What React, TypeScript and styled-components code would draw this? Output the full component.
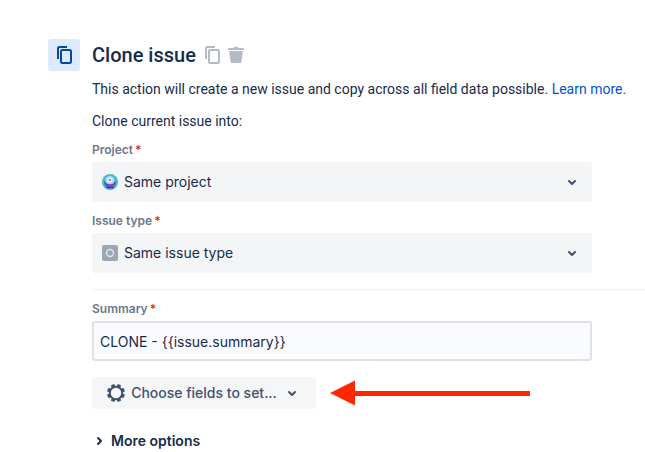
import React from "react";
import styled, { createGlobalStyle } from "styled-components";

const GlobalStyle = createGlobalStyle`
  *, *::before, *::after { box-sizing: border-box; }
  body {
    margin: 0;
    background: #fff;
    color: #172b4d;
    font-family: Inter, "Liberation Sans", sans-serif;
    font-size: 14px;
    line-height: 20px;
    overflow-x: hidden;
  }
  button, input, select { font: inherit; color: inherit; margin: 0; }
`;

const Page = styled.main`
  display: flex;
  align-items: flex-start;
  gap: 12px;
  padding: 39px 0 0 48px;
`;

const ActionTile = styled.div`
  display: flex;
  align-items: center;
  justify-content: center;
  flex: none;
  width: 32px;
  height: 32px;
  border-radius: 3px;
  background: #deebff;
  color: #0747a6;
`;

const Content = styled.section`
  flex: 1;
  min-width: 0;
`;

const Header = styled.header`
  display: flex;
  align-items: center;
  height: 32px;
`;

const Title = styled.h1`
  margin: 0 4px 0 0;
  font-family: Roboto, sans-serif;
  font-size: 20px;
  line-height: 24px;
  font-weight: 500;
`;

const IconButton = styled.button`
  display: flex;
  padding: 0;
  border: 0;
  background: none;
  color: #b3bac5;
  cursor: pointer;
`;

const Text = styled.p`
  margin: 8px 0 12px;
  font-family: Roboto, sans-serif;

  & + & { margin: 0; }
`;

const Link = styled.a`
  color: #0052cc;
  text-decoration: none;
`;

const Field = styled.div`
  max-width: 500px;
  margin-top: 11px;
`;

const Label = styled.label`
  display: block;
  margin-bottom: 4px;
  color: #6b778c;
  font-size: 12px;
  line-height: 16px;
  font-weight: 600;
`;

const Required = styled.span`
  margin-left: 2px;
  color: #de350b;
`;

const SelectBox = styled.div`
  display: grid;
  grid-template-columns: 16px 1fr 24px;
  align-items: center;
  padding: 0 8px 0 10px;
  height: 40px;
  border-radius: 3px;
  background: #f4f5f7;
  color: #42526e;

  svg { pointer-events: none; }
`;

const Select = styled.select`
  width: 100%;
  height: 40px;
  padding: 0 6px;
  border: 0;
  background: transparent;
  color: #172b4d;
  appearance: none;
  outline: none;
`;

const Divider = styled.hr`
  height: 1px;
  margin: 16px 0 0;
  border: 0;
  background: #f0f1f3;
`;

const Input = styled.input`
  display: block;
  width: 100%;
  height: 40px;
  padding: 0 6px;
  border: 2px solid #dfe1e6;
  border-radius: 3px;
  background: #fafbfc;
  outline: none;
`;

const FieldsRow = styled.div`
  display: flex;
  align-items: center;
  gap: 14px;
  margin-top: 16px;
`;

const FieldsButton = styled.button`
  display: flex;
  align-items: center;
  justify-content: space-between;
  width: 224px;
  height: 32px;
  padding: 0 12px;
  border: 0;
  border-radius: 3px;
  background: #f5f6f8;
  color: #42526e;
  font-weight: 500;
  white-space: nowrap;
  cursor: pointer;
`;

const MoreButton = styled.button`
  display: flex;
  align-items: center;
  gap: 3px;
  margin-top: 22px;
  padding: 0;
  border: 0;
  background: none;
  font-weight: 600;
  cursor: pointer;
`;

const CopyIcon = () => (
  <svg width="24" height="24" viewBox="0 0 24 24" fill="none" stroke="currentColor" strokeWidth="2" aria-hidden="true">
    <path d="M6 16V5.500A1.500 1.500 0 0 1 7.500 4H15" />
    <rect x="9" y="7" width="10" height="13" rx="1.5" />
  </svg>
);

const TrashIcon = () => (
  <svg width="24" height="24" viewBox="0 0 24 24" fill="currentColor" aria-hidden="true">
    <path d="M4 6a1 1 0 0 1 1-1h4.500a1 1 0 0 1 1-1h3a1 1 0 0 1 1 1H19a1 1 0 0 1 1 1v1H4z" />
    <path d="M5 8h14l-1.700 11a1 1 0 0 1-1 1H7.700a1 1 0 0 1-1-1z" />
  </svg>
);

const ChevronDown = () => (
  <svg width="24" height="24" viewBox="0 0 24 24" fill="none" stroke="currentColor" strokeWidth="2" strokeLinecap="round" strokeLinejoin="round" aria-hidden="true">
    <path d="M9 11l3 3 3-3" />
  </svg>
);

const ChevronRight = () => (
  <svg width="16" height="16" viewBox="0 0 16 16" fill="none" stroke="currentColor" strokeWidth="2" strokeLinecap="round" strokeLinejoin="round" aria-hidden="true">
    <path d="M6 5l3 3-3 3" />
  </svg>
);

const ProjectAvatar = () => (
  <svg width="16" height="16" viewBox="0 0 16 16" aria-hidden="true">
    <circle cx="8" cy="8" r="8" fill="#3fc1c5" />
    <path d="M2 7.500h12c0 3-1.200 4.500-3 5.500v1.500H5V13C3.200 12 2 10.500 2 7.500z" fill="#6950bd" />
    <path d="M4 13h8l-.5 1h-7z" fill="#403294" />
    <circle cx="8" cy="6.500" r="4.500" fill="#b3d4ff" />
    <circle cx="8" cy="6" r="2.500" fill="#f4f5f7" />
    <circle cx="8" cy="6" r="1.300" fill="#6d9fda" />
    <path d="M3.500 9c2.500 1.500 6.500 1.500 9 0l-1 2.500h-7z" fill="#6950bd" />
  </svg>
);

const IssueTypeIcon = () => (
  <svg width="16" height="16" viewBox="0 0 16 16" aria-hidden="true">
    <rect width="16" height="16" rx="2" fill="#9ca7b5" />
    <circle cx="8" cy="8" r="3.500" fill="none" stroke="#dfe5eb" strokeWidth="1.400" />
  </svg>
);

const GearIcon = () => (
  <svg width="24" height="24" viewBox="0 0 24 24" aria-hidden="true">
    <g fill="currentColor" transform="translate(12 12)">
      {[22.5, 67.5, 112.5, 157.5, 202.5, 247.5, 292.5, 337.5].map((angle) => (
        <path key={angle} transform={`rotate(${angle})`} d="M-2.200-5.500L-1.700-9h3.400l.5 3.500z" />
      ))}
    </g>
    <circle cx="12" cy="12" r="6.200" fill="#f5f6f8" stroke="currentColor" strokeWidth="2" />
  </svg>
);

const Arrow = () => (
  <svg width="200" height="26" viewBox="0 0 200 26" fill="#ff2600" aria-hidden="true">
    <path d="M0 13L25 0.500v25z" />
    <path d="M24 11h176v5H24z" />
  </svg>
);

export default function App() {
  return (
    <>
      <GlobalStyle />
      <Page>
        <ActionTile><CopyIcon /></ActionTile>
        <Content>
          <Header>
            <Title>Clone issue</Title>
            <IconButton type="button" aria-label="Duplicate"><CopyIcon /></IconButton>
            <IconButton type="button" aria-label="Delete"><TrashIcon /></IconButton>
          </Header>
          <Text>
            This action will create a new issue and copy across all field data possible.{" "}
            <Link href="#learn-more">Learn more.</Link>
          </Text>
          <Text>Clone current issue into:</Text>
          <Field>
            <Label htmlFor="project">Project<Required>*</Required></Label>
            <SelectBox>
              <ProjectAvatar />
              <Select id="project"><option>Same project</option></Select>
              <ChevronDown />
            </SelectBox>
          </Field>
          <Field>
            <Label htmlFor="issue-type">Issue type<Required>*</Required></Label>
            <SelectBox>
              <IssueTypeIcon />
              <Select id="issue-type"><option>Same issue type</option></Select>
              <ChevronDown />
            </SelectBox>
          </Field>
          <Divider />
          <Field>
            <Label htmlFor="summary">Summary<Required>*</Required></Label>
            <Input id="summary" defaultValue="CLONE - {{issue.summary}}" />
          </Field>
          <FieldsRow>
            <FieldsButton type="button" aria-haspopup="listbox">
              <GearIcon />
              Choose fields to set...
              <ChevronDown />
            </FieldsButton>
            <Arrow />
          </FieldsRow>
          <MoreButton type="button" aria-expanded="false">
            <ChevronRight />
            More options
          </MoreButton>
        </Content>
      </Page>
    </>
  );
}
